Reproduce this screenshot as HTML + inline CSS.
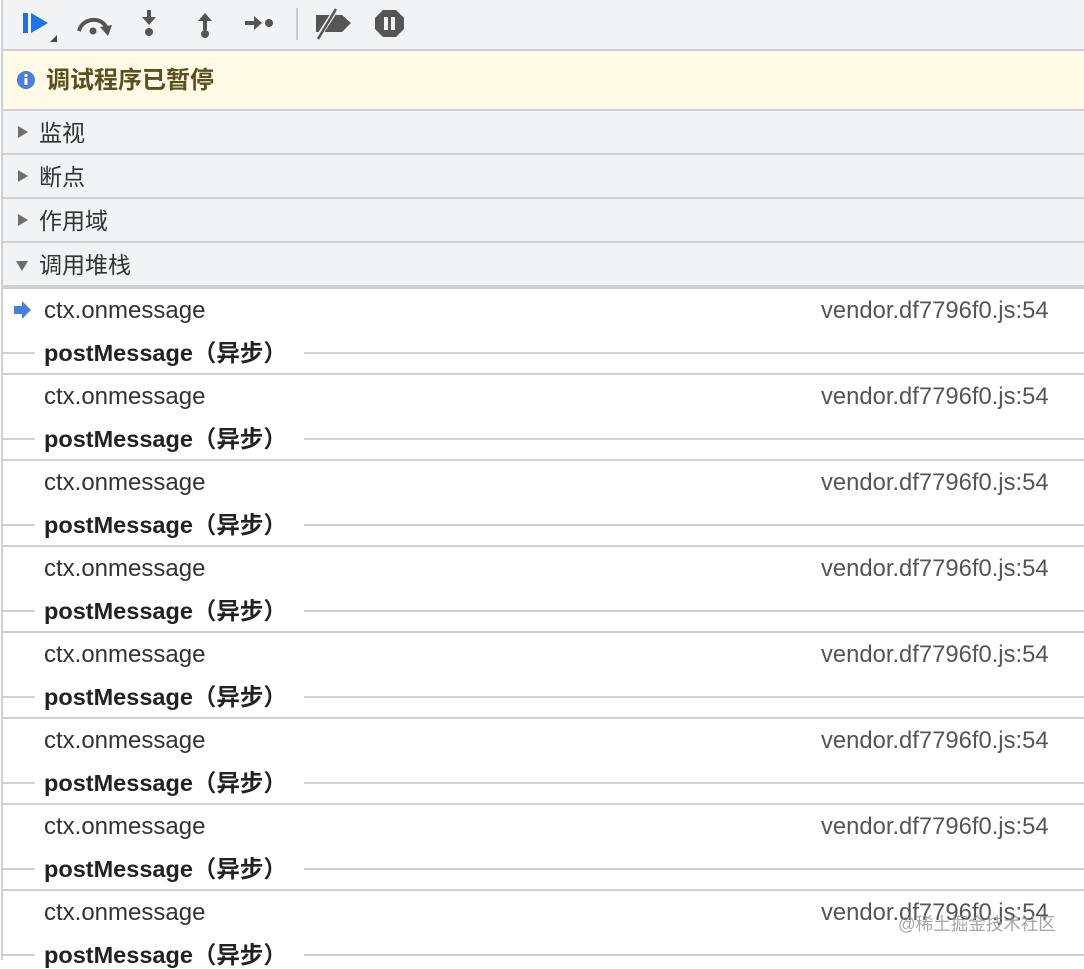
<!DOCTYPE html>
<html><head><meta charset="utf-8"><style>
*{margin:0;padding:0;box-sizing:border-box}
body{width:1084px;height:960px;overflow:hidden;background:#fff;font-family:"Liberation Sans","Noto Sans CJK SC",sans-serif;position:relative}
.abs{position:absolute;line-height:28px;white-space:nowrap}
.vl{left:0;top:0;width:3px;height:960px;background:#fff;border-right:2px solid #cfcfcf;position:absolute;z-index:5}
#tb{left:0;top:0;width:1084px;height:51px;background:#f1f3f4;border-bottom:2px solid #cdcdcd}
#ban{left:0;top:51px;width:1084px;height:60px;background:#fffbe6;border-bottom:2px solid #d0d0d0;font-size:24px;font-weight:bold;color:#5c4f1e}
.sec{left:0;width:1084px;height:44px;background:#f1f3f4;border-bottom:2px solid #d0d0d0;font-size:23px;color:#333}
.sec span{position:absolute;left:39px;top:8px;line-height:28px}
.tri{position:absolute;left:18px;top:15px;width:0;height:0;border-top:6px solid transparent;border-bottom:6px solid transparent;border-left:10px solid #6e6e6e}
.trid{position:absolute;left:16px;top:18px;width:0;height:0;border-left:6px solid transparent;border-right:6px solid transparent;border-top:10px solid #6e6e6e}
.ctx{left:44px;font-size:24px;color:#333}
.src{left:821px;font-size:23.8px;color:#555}
.pm{left:44px;font-size:23.5px;font-weight:bold;color:#222}
.ln{height:2px;background:#d0d0d0}
</style></head><body>
<div class="vl"></div>
<div id="tb" class="abs">
<svg class="abs" style="left:0;top:0" width="420" height="51">
<rect x="23" y="13" width="5" height="20" fill="#1a73e8"/>
<path d="M31 13 L48 23 L31 33Z" fill="#1a73e8"/>
<path d="M50 42 L57 42 L57 35Z" fill="#444"/>
<path d="M79 31 C82 18 101 16 106 27" stroke="#555" stroke-width="4" fill="none"/>
<path d="M100 27 L112 25 L108 36Z" fill="#555"/>
<circle cx="93" cy="31" r="3.5" fill="#555"/>
<path d="M149 10 V20" stroke="#555" stroke-width="4"/><path d="M142 17 H156 L149 25Z" fill="#555"/>
<circle cx="149" cy="32" r="4" fill="#555"/>
<path d="M205 30 V18" stroke="#555" stroke-width="4"/><path d="M198 21 H212 L205 13Z" fill="#555"/>
<circle cx="205" cy="34" r="4" fill="#555"/>
<path d="M245 23 H257" stroke="#555" stroke-width="4"/><path d="M254 16 V30 L262 23Z" fill="#555"/>
<circle cx="269" cy="23" r="4" fill="#555"/>
<rect x="296" y="8" width="2" height="32" fill="#ccc"/>
<path d="M316 15 H342 L351 23 L342 32 H316Z" fill="#555"/>
<path d="M317 39 L337 8" stroke="#f1f3f4" stroke-width="5"/>
<path d="M318 39 L336 9" stroke="#555" stroke-width="2.5"/>
<path d="M383 10 H396 L404 18 V29 L396 37 H383 L375 29 V18Z" fill="#555"/>
<rect x="384" y="17" width="4" height="13" fill="#f1f3f4"/><rect x="391" y="17" width="4" height="13" fill="#f1f3f4"/>
</svg></div>
<div id="ban" class="abs">
<svg class="abs" style="left:16px;top:19px" width="20" height="20"><circle cx="10" cy="10" r="9" fill="#4a7fd8"/><rect x="8.5" y="8" width="3" height="7" fill="#fff"/><circle cx="10" cy="5.5" r="1.6" fill="#fff"/></svg>
<span class="abs" style="left:46px;top:16px">调试程序已暂停</span></div>
<div class="sec abs" style="top:111px"><div class="tri"></div><span>监视</span></div>
<div class="sec abs" style="top:155px"><div class="tri"></div><span>断点</span></div>
<div class="sec abs" style="top:199px"><div class="tri"></div><span>作用域</span></div>
<div class="sec abs" style="top:243px;height:46px;border-bottom:4px solid #d0d0d0"><div class="trid"></div><span>调用堆栈</span></div>
<svg class="abs" style="left:13px;top:301px" width="20" height="18"><path d="M1 5 H9 V0 L18 9 L9 18 V13 H1Z" fill="#4a7fd8"/></svg>

<div class="ctx abs" style="top:297px">ctx.onmessage</div><div class="src abs" style="top:297px">vendor.df7796f0.js:54</div>
<div class="ln abs" style="top:352px;left:3px;width:32px"></div><div class="pm abs" style="top:339px">postMessage（异步）</div><div class="ln abs" style="top:352px;left:304px;width:780px"></div>
<div class="ln abs" style="top:373px;left:3px;width:1081px"></div>

<div class="ctx abs" style="top:383px">ctx.onmessage</div><div class="src abs" style="top:383px">vendor.df7796f0.js:54</div>
<div class="ln abs" style="top:438px;left:3px;width:32px"></div><div class="pm abs" style="top:425px">postMessage（异步）</div><div class="ln abs" style="top:438px;left:304px;width:780px"></div>
<div class="ln abs" style="top:459px;left:3px;width:1081px"></div>

<div class="ctx abs" style="top:469px">ctx.onmessage</div><div class="src abs" style="top:469px">vendor.df7796f0.js:54</div>
<div class="ln abs" style="top:524px;left:3px;width:32px"></div><div class="pm abs" style="top:511px">postMessage（异步）</div><div class="ln abs" style="top:524px;left:304px;width:780px"></div>
<div class="ln abs" style="top:545px;left:3px;width:1081px"></div>

<div class="ctx abs" style="top:555px">ctx.onmessage</div><div class="src abs" style="top:555px">vendor.df7796f0.js:54</div>
<div class="ln abs" style="top:610px;left:3px;width:32px"></div><div class="pm abs" style="top:597px">postMessage（异步）</div><div class="ln abs" style="top:610px;left:304px;width:780px"></div>
<div class="ln abs" style="top:631px;left:3px;width:1081px"></div>

<div class="ctx abs" style="top:641px">ctx.onmessage</div><div class="src abs" style="top:641px">vendor.df7796f0.js:54</div>
<div class="ln abs" style="top:696px;left:3px;width:32px"></div><div class="pm abs" style="top:683px">postMessage（异步）</div><div class="ln abs" style="top:696px;left:304px;width:780px"></div>
<div class="ln abs" style="top:717px;left:3px;width:1081px"></div>

<div class="ctx abs" style="top:727px">ctx.onmessage</div><div class="src abs" style="top:727px">vendor.df7796f0.js:54</div>
<div class="ln abs" style="top:782px;left:3px;width:32px"></div><div class="pm abs" style="top:769px">postMessage（异步）</div><div class="ln abs" style="top:782px;left:304px;width:780px"></div>
<div class="ln abs" style="top:803px;left:3px;width:1081px"></div>

<div class="ctx abs" style="top:813px">ctx.onmessage</div><div class="src abs" style="top:813px">vendor.df7796f0.js:54</div>
<div class="ln abs" style="top:868px;left:3px;width:32px"></div><div class="pm abs" style="top:855px">postMessage（异步）</div><div class="ln abs" style="top:868px;left:304px;width:780px"></div>
<div class="ln abs" style="top:889px;left:3px;width:1081px"></div>

<div class="ctx abs" style="top:899px">ctx.onmessage</div><div class="src abs" style="top:899px">vendor.df7796f0.js:54</div>
<div class="ln abs" style="top:954px;left:3px;width:32px"></div><div class="pm abs" style="top:941px">postMessage（异步）</div><div class="ln abs" style="top:954px;left:304px;width:780px"></div>
<div class="abs" style="left:898px;top:910px;font-size:17.5px;color:rgba(150,150,150,0.85)">@稀土掘金技术社区</div>
</body></html>
